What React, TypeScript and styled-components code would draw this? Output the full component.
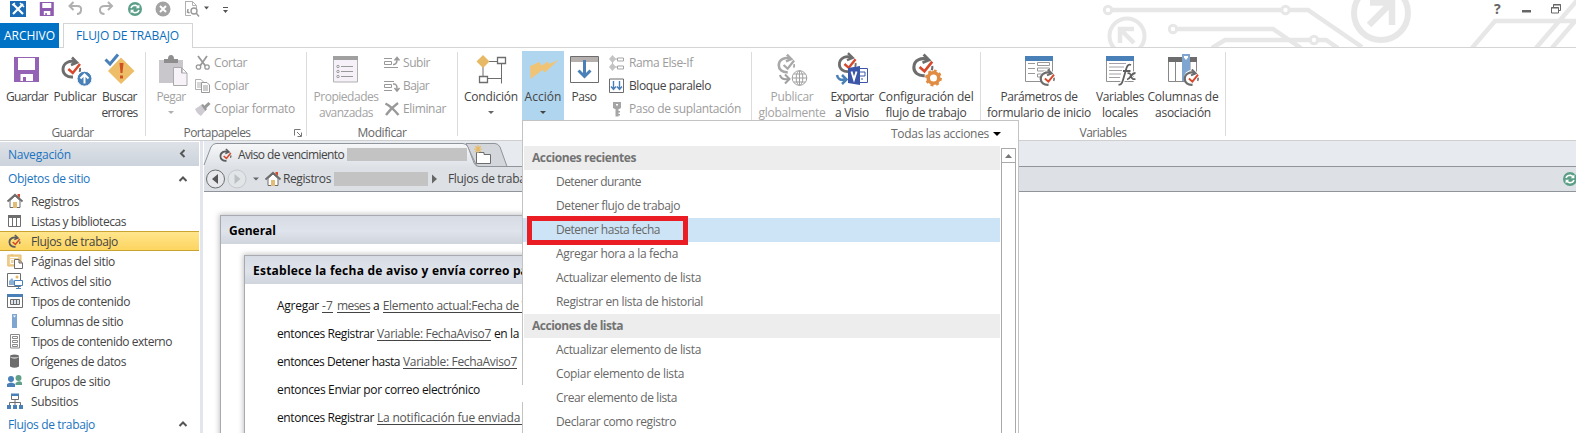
import React, { useLayoutEffect, useRef, useState } from 'react';
import styled, { createGlobalStyle, css } from 'styled-components';

const Global = createGlobalStyle`
  * { box-sizing: border-box; }
  html, body { margin: 0; padding: 0; background: #fff; overflow: hidden; }
  body { font-family: "Open Sans", "Noto Sans", sans-serif; font-size: 12px; line-height: 16px; color: #444; }
  svg { display: block; flex: none; overflow: visible; }
`;

/* ---------- text tracked to a given measure ---------- */

const TrackedText = styled.span`
  display: inline-block;
  white-space: pre;
`;

function T({ w, children }: { w: number; children: string }) {
  const ref = useRef<HTMLSpanElement>(null);
  const [tracking, setTracking] = useState(0);
  useLayoutEffect(() => {
    const el = ref.current;
    if (!el) return;
    const natural = el.getBoundingClientRect().width;
    setTracking((w - natural) / children.length);
  }, []);
  return (
    <TrackedText ref={ref} style={{ letterSpacing: `${tracking}px` }}>
      {children}
    </TrackedText>
  );
}

/* ---------- window ---------- */

const Window = styled.div`
  position: relative;
  width: 1576px;
  height: 433px;
  overflow: hidden;
  background: #fff;
`;

const TitleBar = styled.header`
  position: relative;
  height: 48px;
  border-bottom: 1px solid #d4d4d4;
`;

const Circuit = styled.svg`
  position: absolute;
  right: 0;
  top: 0;
`;

const QuickBar = styled.div`
  position: relative;
  display: flex;
  justify-content: space-between;
  height: 23px;
  padding: 1px 15px 0 10px;
`;

const QuickGroup = styled.div<{ $gap: number }>`
  display: flex;
  align-items: center;
  height: 16px;
  gap: ${(p) => p.$gap}px;
`;

const HelpMark = styled.span`
  font: bold 14px "Noto Sans", sans-serif;
  line-height: 16px;
  width: 8px;
  color: #666;
`;

const TabRow = styled.div`
  position: relative;
  display: flex;
  height: 25px;
`;

const FileTab = styled.div`
  width: 59px;
  background: #0072c6;
  color: #fff;
  padding: 5px 0 0 4px;
`;

const ActiveTab = styled.div`
  width: 130px;
  margin-left: 4px;
  padding: 4px 0 0 12px;
  background: #fff;
  border: 1px solid #d4d4d4;
  border-bottom: 0;
  color: #0a6ebd;
`;

/* ---------- ribbon ---------- */

const Ribbon = styled.div`
  display: flex;
  height: 93px;
  padding-top: 3px;
  border-bottom: 1px solid #cfcfcf;
`;

const Group = styled.section<{ $w: number; $pad: number }>`
  display: flex;
  flex-direction: column;
  width: ${(p) => p.$w}px;
  > div:first-child { padding-left: ${(p) => p.$pad}px; }
`;

const GroupBody = styled.div`
  display: flex;
  height: 73px;
`;

const GroupLabel = styled.div<{ $shift?: number }>`
  position: relative;
  padding: 1px ${(p) => p.$shift ?? 0}px 0 0;
  text-align: center;
  color: #666;
  line-height: 16px;
`;

const Launcher = styled.svg`
  position: absolute;
  right: 4px;
  top: 5px;
`;

const Divider = styled.i`
  width: 1px;
  margin: 1px 0 4px;
  background: #dcdcdc;
`;

const BigButton = styled.div<{ $w: number; $ml?: number; $off?: boolean; $on?: boolean }>`
  display: flex;
  flex-direction: column;
  align-items: center;
  width: ${(p) => p.$w}px;
  height: ${(p) => (p.$on ? 69 : 73)}px;
  margin-left: ${(p) => p.$ml ?? 0}px;
  padding-top: 3px;
  color: ${(p) => (p.$off ? '#a3a3a3' : '#444')};
  ${(p) => p.$on && css`background: #b0d6ef;`}
  > svg:first-child { margin-bottom: 3px; }
`;

const Caret = styled.i<{ $color?: string; $mt?: number; $size?: number }>`
  flex: none;
  width: 0;
  height: 0;
  margin-top: ${(p) => p.$mt ?? 0}px;
  border: ${(p) => p.$size ?? 3}px solid transparent;
  border-top-color: ${(p) => p.$color ?? '#666'};
  border-bottom: 0;
`;

const SmallColumn = styled.div<{ $ml: number }>`
  margin-left: ${(p) => p.$ml}px;
`;

const SmallButton = styled.div<{ $on?: boolean; $gap?: number }>`
  display: flex;
  align-items: center;
  height: 23px;
  gap: ${(p) => p.$gap ?? 3}px;
  color: ${(p) => (p.$on ? '#444' : '#9c9c9c')};
`;

/* ---------- body ---------- */

const Body = styled.div`
  display: flex;
  height: 292px;
`;

const Sidebar = styled.nav`
  width: 199px;
  padding-top: 1px;
  > div > span { padding-top: 1px; }
`;

const SideTitle = styled.div`
  display: flex;
  justify-content: space-between;
  align-items: center;
  height: 24px;
  padding: 0 12px 0 8px;
  background: linear-gradient(#dee2e8, #ccd3dc);
  color: #1a74c0;
`;

const SideHeading = styled.div<{ $h: number }>`
  display: flex;
  justify-content: space-between;
  align-items: center;
  height: ${(p) => p.$h}px;
  padding: 0 12px 0 8px;
  color: #1a74c0;
`;

const SideItem = styled.div<{ $on?: boolean }>`
  display: flex;
  align-items: center;
  gap: 8px;
  height: 20px;
  padding: 0 0 0 7px;
  color: #444;
  ${(p) => p.$on && css`
    background: linear-gradient(#ffe68f, #fdd45d);
    box-shadow: inset 0 1px #c9a431, inset 0 -1px #c9a431;
  `}
`;

const Gutter = styled.div`
  width: 5px;
  border-left: 1px solid #fff;
  border-right: 1px solid #fff;
  background: #e2e5eb;
`;

const Main = styled.main`
  flex: 1;
  display: flex;
  flex-direction: column;
  min-width: 0;
`;

const TabStrip = styled.div`
  position: relative;
  flex: none;
  height: 26px;
  background: #e7eaef;
`;

const TabShapes = styled.svg`
  position: absolute;
  left: 0;
  top: 0;
`;

const DocTab = styled.div`
  position: relative;
  display: flex;
  align-items: center;
  height: 25px;
  padding: 2px 0 0 14px;
  gap: 4px;
`;

const Redacted = styled.span<{ $w: number; $h: number; $ml: number }>`
  width: ${(p) => p.$w}px;
  height: ${(p) => p.$h}px;
  margin-left: ${(p) => p.$ml}px;
  background: #c3c3c3;
`;

const AddressBar = styled.div`
  display: flex;
  flex: none;
  align-items: center;
  height: 25px;
  padding-left: 2px;
  background: #dde1e6;
  border-bottom: 1px solid #90949b;
  > svg:last-child { margin-left: auto; margin-right: -2px; }
`;

const Crumb = styled.span<{ $ml: number }>`
  margin-left: ${(p) => p.$ml}px;
`;

const Canvas = styled.div`
  flex: 1;
  min-height: 0;
  padding: 23px 0 0 16px;
`;

const StagePanel = styled.div`
  height: 240px;
  width: 700px;
  border: 1px solid #a7abb1;
  box-shadow: -1px -1px 5px rgba(90, 90, 90, 0.35);
  background: #fff;
`;

const PanelHead = styled.div`
  height: 28px;
  padding: 7px 0 0 8px;
  background: linear-gradient(#d7dce4, #dfe3eb 55%, #cfd4dd);
  color: #000;
  font-weight: 700;
  white-space: nowrap;
`;

const StepWrap = styled.div`
  padding: 11px 0 0 23px;
`;

const StepLines = styled.div`
  padding: 8px 0 0 32px;
  color: #111;
`;

const StepLine = styled.div`
  display: flex;
  align-items: center;
  height: 28px;
`;

const Link = styled.span<{ $ml?: number }>`
  height: 15px;
  margin-top: -1px;
  margin-left: ${(p) => p.$ml ?? 3}px;
  border-bottom: 1px solid #444;
  color: #555;
  line-height: 16px;
  white-space: nowrap;
`;

/* ---------- action menu ---------- */

const Menu = styled.div`
  position: absolute;
  left: 522px;
  top: 120px;
  width: 497px;
  height: 330px;
  background: #fff;
  border: 1px solid #c3c3c3;
`;

const MenuFilter = styled.div`
  display: flex;
  justify-content: flex-end;
  align-items: center;
  height: 25px;
  padding-right: 17px;
  color: #6b6b6b;
  gap: 4px;
`;

const MenuBody = styled.div`
  display: flex;
`;

const MenuList = styled.div`
  width: 477px;
`;

const MenuGroup = styled.div`
  height: 24px;
  margin-left: 1px;
  padding: 4px 0 0 8px;
  background: #ededed;
  color: #737373;
  font-weight: 700;
`;

const MenuItem = styled.div<{ $on?: boolean }>`
  height: 24px;
  padding: 4px 0 0 33px;
  color: #686868;
  background: ${(p) => (p.$on ? '#cce4f6' : '#fff')};
`;

const Scroll = styled.div`
  width: 15px;
  height: 300px;
  margin: 2px 0 0 1px;
  border: 1px solid #a9a9a9;
`;

const ScrollUp = styled.div`
  display: flex;
  align-items: center;
  justify-content: center;
  height: 14px;
  border-bottom: 1px solid #a9a9a9;
`;

const Highlight = styled.div`
  position: absolute;
  left: 4px;
  top: 95px;
  width: 161px;
  height: 29px;
  border: 5px solid #ea1c24;
`;

const EdgePatch = styled.div`
  position: absolute;
  left: -2px;
  top: 264px;
  width: 3px;
  height: 17px;
  background: #fff;
`;

/* ---------- icons ---------- */

const G = '#6d6d6d';
const L = '#b0b0b0';
const B = '#4a80b8';
const O = '#e8b964';
const R = '#d6492d';

const Cycle = ({ x, y, s = 1, c = G, k = R }: { x: number; y: number; s?: number; c?: string; k?: string }) => (
  <g transform={`translate(${x} ${y}) scale(${s})`} fill="none">
    <path d="M4.500 -6.800C0 -9 -8 -7 -8 .5C-8 5 -4 8.500 2 8" stroke={c} strokeWidth="2.900" />
    <path d="M1 -11.500L6 -6.500L0 -4" stroke={c} strokeWidth="2.600" />
    <path d="M9 -1Q9.500 1 8.500 3" stroke={c} strokeWidth="2" />
    <path d="M-2.700 0L1.800 4L9 -5" stroke={k} strokeWidth="2.500" />
  </g>
);

const Big = ({ children }: { children: React.ReactNode }) => (
  <svg width="32" height="32" viewBox="0 0 32 32">{children}</svg>
);
const Small = ({ children }: { children: React.ReactNode }) => (
  <svg width="16" height="16" viewBox="0 0 16 16">{children}</svg>
);

const FormIcon = ({ children }: { children?: React.ReactNode }) => (
  <>
    <path d="M2.500 3V27.500H29.500V3" fill="#fff" stroke="#919191" />
    <path d="M2 2H30V7H2Z" fill={B} />
    {children}
  </>
);

const SyncIcon = () => (
  <Small>
    <circle cx="8" cy="8" r="7" fill="#5b9f87" />
    <path d="M4 7Q5 4.200 8.500 4.300L11 5.500M12 9Q11 11.800 7.500 11.700L5 10.500" fill="none" stroke="#fff" strokeWidth="1.500" />
    <path d="M12.400 3.500V7.300H8.800ZM3.600 12.500V8.700H7.200Z" fill="#fff" />
  </Small>
);

const HomeIcon = () => (
  <Small>
    <path d="M10.500 1H13V5L10.500 3Z" fill={R} />
    <path d="M3 7.500V14.500H13V7.500L8 3Z" fill="#fff" stroke={G} />
    <path d="M.5 8.500L8 1.800L15.500 8.500" fill="none" stroke={G} strokeWidth="1.800" />
    <path d="M6 9H10V15H6Z" fill="#e3bd77" />
  </Small>
);

const SmallCycle = () => (
  <Small><Cycle x={7.3} y={9} s={0.61} c="#5c5c5c" /></Small>
);

const Chevron = ({ d }: { d: string }) => (
  <svg width="8" height="8" viewBox="0 0 8 8"><path d={d} fill="none" stroke="#555" strokeWidth="2" /></svg>
);

const sideItems: { t: string; w: number; on?: boolean; icon: React.ReactNode }[] = [
  { t: 'Registros', w: 48, icon: <HomeIcon /> },
  { t: 'Listas y bibliotecas', w: 95, icon: <Small><path d="M1.500 3V13.500H13.500V3M5.500 5V13M9.500 5V13" fill="none" stroke={G} /><path d="M1 2H14V5H1Z" fill={G} /></Small> },
  { t: 'Flujos de trabajo', w: 87, on: true, icon: <SmallCycle /> },
  { t: 'Páginas del sitio', w: 84, icon: <Small><path d="M.8 2H14V13H.8ZM5 1V3" fill="#eed29a" stroke={O} /><path d="M3 4.500H11M3.500 6.500H7V10.500H3.500Z" fill="none" stroke="#fff" /><path d="M7.500 6.500H12L15.500 10V15.500H7.500ZM12 6.500V10H15" fill="#fff" stroke={G} /></Small> },
  { t: 'Activos del sitio', w: 80, icon: <Small><path d="M.5 .5H13.500V13.500H.5Z" fill="#fff" stroke={G} /><path d="M2 12V8L5 5L7 8V12Z" fill="#8ab0d6" /><circle cx="10" cy="4" r="1.500" fill={O} /><path d="M7.500 7.500H15.500V12.500H7.500ZM11.500 13V15M9 15.500H14" fill="#fff" stroke={B} /></Small> },
  { t: 'Tipos de contenido', w: 99, icon: <Small><path d="M.5 1.500H15.500V14.500H.5Z" fill="#fff" stroke={G} /><path d="M0 1H16V4H0Z" fill={B} /><path d="M3.500 6.500H12.500V11.500H3.500ZM6.500 6V12M9.500 6V12" fill="#dce3ea" stroke={G} /></Small> },
  { t: 'Columnas de sitio', w: 92, icon: <Small><path d="M5 1H10V15H5Z" fill="#7fa6d0" /><path d="M6 2.500H9L7.500 4.500Z" fill="#fff" /></Small> },
  { t: 'Tipos de contenido externo', w: 141, icon: <Small><path d="M3.500 1.500H12.500V15H3.500ZM5.500 3.500H10.500V5.500H5.500ZM5.500 7.500H10.500V9.500H5.500ZM5.500 11.500H10.500V13.500H5.500Z" fill="#fff" stroke="#8a8a8a" /></Small> },
  { t: 'Orígenes de datos', w: 95, icon: <Small><path d="M3 4Q7.500 7 12 4V13.500Q7.500 16 3 13.500Z" fill={G} /><ellipse cx="7.500" cy="3" rx="4.500" ry="1.600" fill={G} /></Small> },
  { t: 'Grupos de sitio', w: 79, icon: <Small><circle cx="4" cy="6" r="3" fill={B} /><path d="M0 14V11Q4 8 8 11V14Z" fill={B} /><circle cx="11.500" cy="5" r="3" fill="#62a089" /><path d="M8.500 12V10Q12 7 15 9.500V12Z" fill="#62a089" /></Small> },
  { t: 'Subsitios', w: 47, icon: <Small><path d="M4.500 1.500H11.500V6.500H4.500ZM8 7V12M2.500 12V9.500H13.500V12" fill="#fff" stroke={G} /><path d="M4 .5H12V3H4ZM0 12H4V16H0ZM6 12H10V16H6ZM12 12H16V16H12Z" fill={B} /></Small> },
];

const menuGroups: { t: string; w: number; items: [string, number][] }[] = [
  { t: 'Acciones recientes', w: 104, items: [['Detener durante', 85], ['Detener flujo de trabajo', 124], ['Detener hasta fecha', 104], ['Agregar hora a la fecha', 122], ['Actualizar elemento de lista', 145], ['Registrar en lista de historial', 147]] },
  { t: 'Acciones de lista', w: 91, items: [['Actualizar elemento de lista', 145], ['Copiar elemento de lista', 128], ['Crear elemento de lista', 121], ['Declarar como registro', 120]] },
];

function CircuitArt() {
  return (
    <Circuit width="486" height="47" viewBox="0 0 486 47">
      <defs><clipPath id="bar"><path d="M0 0H486V47H0Z" /></clipPath></defs>
      <g clipPath="url(#bar)" fill="none" stroke="#e7e7e7" strokeWidth="4.500">
        <path d="M22 10H218L272 47M87 29H183L211 48M122 48L135 40H236L248 48M382 48L405 21H486M446 48L490 -3M462 48L486 20" />
        <g fill="#fff" strokeWidth="3"><circle cx="18" cy="10" r="3.700" /><circle cx="195.500" cy="10" r="3.700" /><circle cx="83" cy="29" r="3.700" /><circle cx="224" cy="40" r="3.700" /></g>
        <circle cx="37" cy="36" r="17.500" fill="#fff" strokeWidth="4" />
        <path d="M30 43V29H44M30 29L44 43" strokeWidth="4.500" />
        <circle cx="291" cy="13" r="27" fill="#fff" strokeWidth="6" />
        <path d="M280 2.500H302V25M301 3L279 25" strokeWidth="6.500" />
      </g>
    </Circuit>
  );
}

export default function App() {
  return (
    <Window>
      <Global />
      <TitleBar>
        <CircuitArt />
        <QuickBar>
          <QuickGroup $gap={13.2}>
            <Small><path d="M0 0H16V16H0Z" fill="#1b6cb5" /><path d="M3 3L13 13M13 3L3 13" stroke="#fff" strokeWidth="2.200" /><path d="M10 2L14 6M2 4L5 2" stroke="#fff" strokeWidth="1.500" /></Small>
            <Small><path transform="translate(.8 0)" fill="#8e5bb0" fillRule="evenodd" d="M0 1H14V15H0ZM2.500 2V7H11.500V2ZM4 10V14H5.500V12H7V14H10.500V10Z" /></Small>
            <Small><path d="M5.500 1L1.500 5L5.500 9M2 5H9Q14 5 13 9.500Q12.500 13 9 13" fill="none" stroke={L} strokeWidth="2" /></Small>
            <Small><path d="M10 1L14 5L10 9M13.500 5H7Q1.500 5 2 9.500Q2.500 13 6.500 13" fill="none" stroke={L} strokeWidth="2" /></Small>
            <SyncIcon />
            <Small><circle cx="7" cy="8" r="7.500" fill="#a3a3a3" /><path d="M4 5L10 11M10 5L4 11" stroke="#fff" strokeWidth="2" /></Small>
            <Small><path d="M.5 .5H7.500L11.500 4.500V8M.5 0V14.500H6M7.500 .5V4.500H11" fill="none" stroke={L} /><circle cx="9" cy="10" r="3" fill="#fff" stroke="#999" strokeWidth="1.400" /><path d="M11.500 12.500L14 15.500M3 8L2.500 11L4.500 12" fill="none" stroke="#999" strokeWidth="1.500" /></Small>
            <svg width="22" height="16" viewBox="0 0 22 16"><path d="M-10 5.500H-5L-7.500 8.500ZM9 9H14L11.500 12ZM9 6H14V7H9Z" fill="#555" /></svg>
          </QuickGroup>
          <QuickGroup $gap={20}>
            <HelpMark>?</HelpMark>
            <svg width="9" height="16" viewBox="0 0 9 16"><path d="M0 9H9V11.500H0Z" fill="#666" /></svg>
            <svg width="10" height="16" viewBox="0 0 10 16"><path d="M2.500 7V3.500H9.500V9.500H7.500M.5 6.500H7.500V12H.5ZM0 7H8M2 4H10" fill="none" stroke="#666" /></svg>
          </QuickGroup>
        </QuickBar>
        <TabRow>
          <FileTab><T w={51}>ARCHIVO</T></FileTab>
          <ActiveTab><T w={103}>FLUJO DE TRABAJO</T></ActiveTab>
        </TabRow>
      </TitleBar>

      <Ribbon>
        <Group $w={145} $pad={3}>
          <GroupBody>
            <BigButton $w={48}><Big><path fill="#9463b5" fillRule="evenodd" d="M3 3H28V28H3ZM7 4V16H24V4ZM9.500 20V27H12V23H15V27H22V20Z" /></Big><T w={42}>Guardar</T></BigButton>
            <BigButton $w={48}>
              <Big><Cycle x={12} y={15} /><circle cx="25.500" cy="24.700" r="7.500" fill={B} stroke="#fff" /><path d="M25.500 29.500V21M21.500 24.500L25.500 20.500L29.500 24.500" fill="none" stroke="#fff" strokeWidth="2" /></Big>
              <T w={43}>Publicar</T>
            </BigButton>
            <BigButton $w={41}>
              <Big><path d="M17 3.500L30.500 17L17 30L4 17Z" fill="#edbd68" /><path d="M15.500 9H19.500L18.500 19H16.500ZM16 21.500H19V24.500H16Z" fill="#cf5023" /><path d="M1.500 5.500L6 10L14 .5" fill="none" stroke={B} strokeWidth="3" /></Big>
              <T w={35}>Buscar</T><T w={36}>errores</T>
            </BigButton>
          </GroupBody>
          <GroupLabel><T w={42}>Guardar</T></GroupLabel>
        </Group>
        <Divider />

        <Group $w={160} $pad={3}>
          <GroupBody>
            <BigButton $w={44} $off>
              <Big><path d="M4 6H28V29H4Z" fill="#c9c7cb" /><path d="M9 5H13Q13 1 16 1T19 5H23V9H9Z" fill="#8e8e8e" /><path d="M18.500 13.500H26.500L32 19V31.500H18.500ZM26.500 13.500V19H32" fill="#f6f2f8" stroke="#aaa" /></Big>
              <T w={29}>Pegar</T><Caret $mt={6} $color="#b0b0b0" />
            </BigButton>
            <SmallColumn $ml={2}>
              <SmallButton><Small><path d="M3 1L10.500 11M12 1L5 11" stroke="#999" strokeWidth="1.800" /><circle cx="3.500" cy="12" r="2.200" fill="none" stroke="#999" strokeWidth="1.300" /><circle cx="12" cy="12" r="2.200" fill="none" stroke="#999" strokeWidth="1.300" /></Small><T w={33}>Cortar</T></SmallButton>
              <SmallButton><Small><path d="M.5 1.500H6L8.500 4V11.500H.5ZM2 5H6M2 7H6M2 9H6" fill="#fff" stroke={L} /><path d="M6.500 4.500H12L14.500 7V14.500H6.500ZM8 8H13M8 10H13M8 12H13" fill="#fff" stroke="#999" /></Small><T w={35}>Copiar</T></SmallButton>
              <SmallButton><Small><path d="M0 8L6 4L11 9L6 15Q2 13 0 8Z" fill="#cfcbd2" /><path d="M6 4L8 3L12 8L10.500 10ZM9 5L13.500 1L15.500 3L11.500 7Z" fill="#999" /></Small><T w={81}>Copiar formato</T></SmallButton>
            </SmallColumn>
          </GroupBody>
          <GroupLabel $shift={18}>
            <T w={67}>Portapapeles</T>
            <Launcher width="8" height="8" viewBox="0 0 8 8"><path d="M.5 6.500V.5H6.500M3 3L7 7M7.500 3.500V7.500H3.500" fill="none" stroke="#777" /></Launcher>
          </GroupLabel>
        </Group>
        <Divider />

        <Group $w={150} $pad={4}>
          <GroupBody>
            <BigButton $w={70} $off>
              <Big><path d="M3.500 2.500H27.500V28H3.500Z" fill="#f6f0f8" stroke={L} /><path d="M3 2H28V6H3Z" fill="#a0a0a0" /><path d="M11 12.500H23M11 17.500H23M11 22.500H23" stroke="#999" /><g fill="none" stroke="#999"><circle cx="8" cy="12.500" r="1.200" /><circle cx="8" cy="17.500" r="1.200" /><circle cx="8" cy="22.500" r="1.200" /></g></Big>
              <T w={65}>Propiedades</T><T w={54}>avanzadas</T>
            </BigButton>
            <SmallColumn $ml={3}>
              <SmallButton><Small><path d="M0 3.500H8M.5 6.500H7.500V9.500H.5ZM0 12.500H14" fill="none" stroke="#999" /><path d="M9 9.500H10Q13.500 9 13 3M10.500 5.500L13 2.500L15.500 5.500" fill="none" stroke="#999" strokeWidth="1.500" /></Small><T w={27}>Subir</T></SmallButton>
              <SmallButton><Small><path d="M0 3.500H10M.5 6.500H7.500V9.500H.5ZM0 12.500H8" fill="none" stroke="#999" /><path d="M9 6H10Q13.500 6 13 12M10.500 10L13 13L15.500 10" fill="none" stroke="#999" strokeWidth="1.500" /></Small><T w={26}>Bajar</T></SmallButton>
              <SmallButton><Small><path d="M1.500 2.500Q8 6 14.500 14M14 2Q7 7 2 14" fill="none" stroke="#999" strokeWidth="2.400" /></Small><T w={43}>Eliminar</T></SmallButton>
            </SmallColumn>
          </GroupBody>
          <GroupLabel><T w={49}>Modificar</T></GroupLabel>
        </Group>
        <Divider />

        <Group $w={293} $pad={3}>
          <GroupBody>
            <BigButton $w={60}>
              <Big><path d="M8 8V22M8 7.500H22M26.500 10V29.500M12 24.500H26" fill="none" stroke={G} /><path d="M8 1L14.500 7.500L8 14L1.500 7.500Z" fill={O} /><path d="M22.500 3.500H30.500V9.500H22.500ZM4.500 22.500H12.500V28.500H4.500Z" fill="#fff" stroke={G} strokeWidth="1.300" /></Big>
              <T w={54}>Condición</T><Caret $mt={6} />
            </BigButton>
            <BigButton $w={42} $ml={1} $on>
              <Big><path d="M3 12L12.500 8L14.500 11.500L21 7.500L22 10L31.500 6L18 18.500L15.500 16L3.500 25Z" fill="#f0c477" /></Big>
              <T w={37}>Acción</T><Caret $mt={6} $color="#444" />
            </BigButton>
            <BigButton $w={38} $ml={1}>
              <Big><path d="M2.500 2.500H30.500V28.500H2.500Z" fill="#fff" stroke={G} /><path d="M3 3H30V8H3Z" fill="#b5b0ae" /><path d="M16.500 6V23M10.500 16.500L16.500 22.500L22.500 16.500" fill="none" stroke={B} strokeWidth="3" /></Big>
              <T w={25}>Paso</T>
            </BigButton>
            <SmallColumn $ml={6}>
              <SmallButton $gap={4}><Small><path d="M4 4H9M4 12H9M3.500 4V12" fill="none" stroke={L} /><path d="M3.500 0L7 4L3.500 8L0 4ZM3.500 8L7 12L3.500 16L0 12Z" fill="#c4c4c4" /><path d="M8.500 3H14.500V6H8.500ZM8.500 11H14.500V14H8.500Z" fill="#fff" stroke="#a5a5a5" /></Small><T w={64}>Rama Else-If</T></SmallButton>
              <SmallButton $gap={4} $on><Small><path d="M.5 1H14.500V14.500H.5Z" fill="#fff" stroke={G} /><path d="M4.500 3V11M2 8.500L4.500 11.500L7 8.500M10.500 3V11M8 8.500L10.500 11.500L13 8.500" fill="none" stroke={B} strokeWidth="1.400" /></Small><T w={82}>Bloque paralelo</T></SmallButton>
              <SmallButton $gap={4}><Small><path d="M4 1H12V7L10 8H6L4 7ZM6.500 7H9.500V15.500H6.500ZM9 10H11V11.500H9ZM9 13H11V14.500H9Z" fill="#a5a5a5" /><path d="M7 3H9V4.500H7Z" fill="#fff" /></Small><T w={112}>Paso de suplantación</T></SmallButton>
            </SmallColumn>
          </GroupBody>
        </Group>
        <Divider />

        <Group $w={228} $pad={5}>
          <GroupBody>
            <BigButton $w={70} $off>
              <Big><Cycle x={10} y={11} s={0.9} c="#a8a8a8" k="#a8a8a8" /><path d="M4 21Q5 26 12 25M9 20.500L13.500 25L9 29.500" fill="none" stroke="#a0a0a0" strokeWidth="2" /><g fill="#fff" stroke="#a0a0a0"><circle cx="23.500" cy="24" r="7.300" /><ellipse cx="23.500" cy="24" rx="3.300" ry="7.300" /><path d="M16 24H31M23.500 17V31M18 20H29M18 28H29" /></g></Big>
              <T w={43}>Publicar</T><T w={67}>globalmente</T>
            </BigButton>
            <BigButton $w={46} $ml={2}>
              <Big><Cycle x={11} y={10} s={0.95} /><path d="M1 21Q2 27 9 25.500M6 21L10.500 25.500L6 30" fill="none" stroke={B} strokeWidth="2.500" /><path d="M20 14.500H31.500V28.500H20Z" fill="#fff" stroke="#3b56a8" /><path d="M24 18H29V22H24M25 25H27" fill="none" stroke="#3b56a8" /><path d="M12 14L24 12V31L12 29Z" fill="#3b56a8" /><path d="M15.500 17.500L18 25.500L20.500 17.500" fill="none" stroke="#fff" strokeWidth="1.900" /></Big>
              <T w={43}>Exportar</T><T w={34}>a Visio</T>
            </BigButton>
            <BigButton $w={98} $ml={2}>
              <Big><Cycle x={12.5} y={13} s={1.08} /><circle cx="23.500" cy="24" r="5.300" fill="#fff" stroke="#e08c43" strokeWidth="3.600" /><circle cx="23.500" cy="24" r="7.300" fill="none" stroke="#e08c43" strokeWidth="2.200" strokeDasharray="2.870 2.870" /></Big>
              <T w={95}>Configuración del</T><T w={81}>flujo de trabajo</T>
            </BigButton>
          </GroupBody>
        </Group>
        <Divider />

        <Group $w={244} $pad={5}>
          <GroupBody>
            <BigButton $w={106}>
              <Big><FormIcon><path d="M5 9.500H12M5 14.500H12M5 19.500H12M14.500 8.500H26.500V11.500H14.500ZM14.500 14H26.500V17H14.500ZM14.500 20H20V23H14.500Z" fill="none" stroke="#999" /></FormIcon><circle cx="25" cy="24" r="8" fill="#fff" /><Cycle x={24} y={24.5} s={0.78} /></Big>
              <T w={77}>Parámetros de</T><T w={104}>formulario de inicio</T>
            </BigButton>
            <BigButton $w={50} $ml={3}>
              <Big><FormIcon><path d="M5 9.500H22M5 13H20M5 16.500H18M5 20H17M5 23.500H16" fill="none" stroke="#a5a0a8" /></FormIcon><path d="M27 11Q24 9.500 22.500 14L19 26Q17.500 31.500 14.500 30.500M19 17H26.500M23.500 19.500Q26 18 27 22T31.500 25M31.500 19Q29 19 27 22T23 25.500" fill="none" stroke="#fff" strokeWidth="4" /><path d="M27 11Q24 9.500 22.500 14L19 26Q17.500 31.500 14.500 30.500M19 17H26.500M23.500 19.500Q26 18 27 22T31.500 25M31.500 19Q29 19 27 22T23 25.500" fill="none" stroke="#606060" strokeWidth="1.800" /></Big>
              <T w={48}>Variables</T><T w={36}>locales</T>
            </BigButton>
            <BigButton $w={72} $ml={2}>
              <Big><path d="M1.500 3.500H29.500V27.500H1.500ZM8.500 5V27M16 5V27M23 5V27" fill="#fff" stroke="#888" /><path d="M1 3H30V8H1Z" fill={G} /><path d="M15 0H23V27H15Z" fill="#7fa6d0" /><path d="M17 2H21V3.500L19 6L17 3.500Z" fill="#fff" /><circle cx="25" cy="24" r="8" fill="#fff" /><Cycle x={24} y={24.5} s={0.78} /></Big>
              <T w={71}>Columnas de</T><T w={56}>asociación</T>
            </BigButton>
          </GroupBody>
          <GroupLabel><T w={47}>Variables</T></GroupLabel>
        </Group>
        <Divider />
      </Ribbon>

      <Body>
        <Sidebar>
          <SideTitle><T w={63}>Navegación</T><Chevron d="M5.500 0L2 3.500L5.500 7" /></SideTitle>
          <SideHeading $h={25}><T w={82}>Objetos de sitio</T><Chevron d="M.5 6L4 2.500L7.500 6" /></SideHeading>
          {sideItems.map((it) => (
            <SideItem key={it.t} $on={it.on}>{it.icon}<T w={it.w}>{it.t}</T></SideItem>
          ))}
          <SideHeading $h={26}><T w={87}>Flujos de trabajo</T><Chevron d="M.5 6L4 2.500L7.500 6" /></SideHeading>
        </Sidebar>
        <Gutter />
        <Main>
          <TabStrip>
            <TabShapes width="1372" height="26" viewBox="0 0 1372 26">
              <defs><linearGradient id="tab" x1="0" y1="0" x2="0" y2="1"><stop offset="0" stopColor="#f6f7f8" /><stop offset="1" stopColor="#dde1e6" /></linearGradient></defs>
              <path d="M262 2.500H291Q294 2.500 296 6L303 25.500H273Z" fill="#d3d7dc" stroke="#90949b" />
              <path d="M272 25.500H1372" stroke="#90949b" />
              <path d="M0 27V24L7 6Q9 2.500 12 2.500H259Q262 2.500 264 6L270 22Q271.500 25.500 275 25.500V27Z" fill="url(#tab)" />
              <path d="M0 24L7 6Q9 2.500 12 2.500H259Q262 2.500 264 6L270 22Q271.500 25.500 275 25.500" fill="none" stroke="#90949b" />
              <path d="M272.500 11.500H280V13.500H286.500V22.500H272.500Z" fill="#fff" stroke="#6d6d6d" />
              <path d="M274 4V12M270 8H278M271.200 5.200L276.800 10.800M276.800 5.200L271.200 10.800" stroke={O} strokeWidth="1.200" />
            </TabShapes>
            <DocTab><SmallCycle /><T w={106}>Aviso de vencimiento</T><Redacted $w={120} $h={13} $ml={-1} /></DocTab>
          </TabStrip>
          <AddressBar>
            <svg width="59" height="20" viewBox="0 0 59 20"><circle cx="9.500" cy="10" r="9" fill="#e6e8eb" stroke="#6d6d6d" /><path d="M12 5V15L6 10Z" fill="#555" /><circle cx="31" cy="10" r="9" fill="#e2e5e8" stroke="#c4c7cb" /><path d="M28.500 5V15L34.500 10Z" fill="#bcbfc3" /><path d="M47 8.500H53L50 11.500Z" fill="#666" /></svg>
            <HomeIcon />
            <Crumb $ml={2}><T w={48}>Registros</T></Crumb>
            <Redacted $w={94} $h={14} $ml={3} />
            <svg width="6" height="10" viewBox="0 0 6 10"><path d="M4 .5V9.500L9 5Z" fill="#666" /></svg>
            <Crumb $ml={14}><T w={87}>Flujos de trabajo</T></Crumb>
            <SyncIcon />
          </AddressBar>
          <Canvas>
            <StagePanel>
              <PanelHead><T w={47}>General</T></PanelHead>
              <StepWrap>
                <StagePanel>
                  <PanelHead><T w={260}>{'Establece la fecha de aviso y envía correo '}</T>pa</PanelHead>
                  <StepLines>
                    <StepLine><T w={42}>Agregar</T><Link><T w={11}>-7</T></Link><Link $ml={4}><T w={33}>meses</T></Link><Crumb $ml={3}>a</Crumb><Link><T w={146}>{'Elemento actual:Fecha de V'}</T></Link></StepLine>
                    <StepLine><T w={97}>entonces Registrar</T><Link><T w={114}>Variable: FechaAviso7</T></Link><Crumb $ml={3}><T w={25}>en la</T></Crumb></StepLine>
                    <StepLine><T w={123}>entonces Detener hasta</T><Link><T w={114}>Variable: FechaAviso7</T></Link></StepLine>
                    <StepLine><T w={203}>entonces Enviar por correo electrónico</T></StepLine>
                    <StepLine><T w={97}>entonces Registrar</T><Link><T w={146}>{'La notificación fue enviada '}</T></Link></StepLine>
                  </StepLines>
                </StagePanel>
              </StepWrap>
            </StagePanel>
          </Canvas>
        </Main>
      </Body>

      <Menu>
        <MenuFilter><T w={98}>Todas las acciones</T><Caret $size={4} $color="#000" /></MenuFilter>
        <MenuBody>
          <MenuList>
            {menuGroups.map((g) => (
              <React.Fragment key={g.t}>
                <MenuGroup><T w={g.w}>{g.t}</T></MenuGroup>
                {g.items.map(([t, w]) => (
                  <MenuItem key={t} $on={t === 'Detener hasta fecha'}><T w={w}>{t}</T></MenuItem>
                ))}
              </React.Fragment>
            ))}
          </MenuList>
          <Scroll><ScrollUp><svg width="7" height="4" viewBox="0 0 7 4"><path d="M0 4L3.500 0L7 4Z" fill="#777" /></svg></ScrollUp></Scroll>
        </MenuBody>
        <Highlight />
        <EdgePatch />
      </Menu>
    </Window>
  );
}
